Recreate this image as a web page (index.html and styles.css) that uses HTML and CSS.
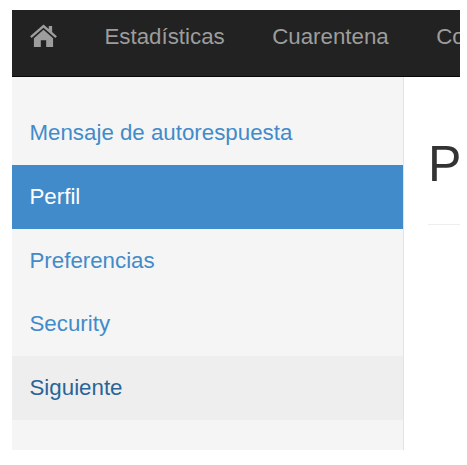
FILE: index.html
```html
<!DOCTYPE html>
<html lang="es">
<head>
  <meta charset="UTF-8">
  <title>Perfil</title>
  <link rel="stylesheet" href="styles.css">
</head>
<body>
  <div class="frame">
    <!-- barra superior -->
    <nav class="navbar">
      <a class="nav-home" href="#" aria-label="Inicio">
        <svg class="home-icon" viewBox="0 0 28 24" width="27" height="23">
          <path d="M14 0.5 L19.5 5.3 V2 H23 V8.4 L28 12.8 L26.4 14.6 L14 3.8 L1.6 14.6 L0 12.8 Z"/>
          <path d="M14 6 L24 14.8 V24 H16.8 V17 H11.2 V24 H4 V14.8 Z"/>
        </svg>
      </a>
      <a href="#">Estadísticas</a>
      <a href="#">Cuarentena</a>
      <a href="#">Configuración</a>
    </nav>

    <div class="content">
      <!-- menu lateral -->
      <ul class="sidebar">
        <li><a href="#">Mensaje de autorespuesta</a></li>
        <li class="active"><a href="#">Perfil</a></li>
        <li><a href="#">Preferencias</a></li>
        <li><a href="#">Security</a></li>
        <li class="hover"><a href="#">Siguiente</a></li>
      </ul>

      <main class="main">
        <h1>Perfil</h1>
      </main>
    </div>
  </div>
</body>
</html>
```

FILE: styles.css
```css
html,
body {
  margin: 0;
  padding: 0;
  background-color: #fff;
}
body {
  font-family: "Liberation Sans", Arial, sans-serif;
  font-size: 22.3px;
}
a {
  text-decoration: none;
}
.frame {
  width: 448px;
  height: 440px;
  margin: 10px 0 0 12px;
  overflow: hidden;
  display: flex;
  flex-direction: column;
}
/* barra superior */
.navbar {
  height: 54px;
  flex-shrink: 0;
  display: flex;
  align-items: center;
  gap: 47.5px;
  padding: 0 0 12px 18px;
  background-color: #222;
  border-bottom: 1px solid #080808;
  white-space: nowrap;
}
.navbar a {
  color: #9d9d9d;
}
.nav-home {
  display: flex;
  margin-bottom: 3px;
}
.home-icon {
  fill: #9d9d9d;
}
.content {
  flex: 1;
  display: flex;
  min-height: 0;
}
/* menu lateral */
.sidebar {
  width: 391px;
  flex-shrink: 0;
  margin: 0;
  padding: 24px 0 0;
  list-style: none;
  background-color: #f5f5f5;
  border-right: 1px solid #e3e3e3;
}
.sidebar li {
  height: 63.85px;
  display: flex;
  align-items: center;
  padding-left: 17.5px;
}
.sidebar a {
  color: #428bca;
}
.sidebar .active {
  background-color: #428bca;
}
.sidebar .active a {
  color: #fff;
}
.sidebar .hover {
  background-color: #eee;
}
.sidebar .hover a {
  color: #2a6496;
}
.main {
  flex: 1;
  min-width: 0;
  padding: 0 0 0 24px;
  overflow: hidden;
}
.main h1 {
  margin: 58px 0 0;
  padding-bottom: 31px;
  border-bottom: 1px solid #eee;
  font-size: 50px;
  font-weight: 400;
  line-height: 58px;
  color: #333;
  white-space: nowrap;
}
```
